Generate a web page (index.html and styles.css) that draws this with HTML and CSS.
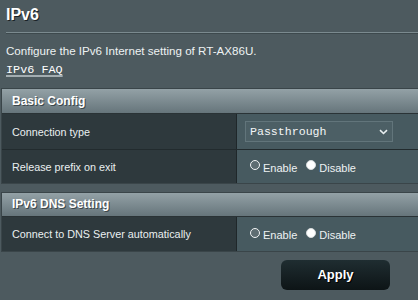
FILE: index.html
```html
<!DOCTYPE html>
<html>
<head>
<meta charset="utf-8">
<link rel="stylesheet" href="styles.css">
</head>
<body>
<div class="page">
  <div class="title">IPv6</div>
  <div class="split"></div>
  <div class="desc">Configure the IPv6 Internet setting of RT-AX86U.</div>
  <div class="faq"><a href="#">IPv6 FAQ</a></div>

  <div class="table first">
    <div class="thead">Basic Config</div>
    <div class="row r1">
      <div class="label">Connection type</div>
      <div class="value">
        <div class="select"><span>Passthrough</span>
          <svg class="chev" width="9" height="6" viewBox="0 0 9 6"><path d="M1 1.2 L4.5 4.5 L8 1.2" fill="none" stroke="#e8eef0" stroke-width="1.6"/></svg>
        </div>
      </div>
    </div>
    <div class="row r2">
      <div class="label">Release prefix on exit</div>
      <div class="value radios">
        <span class="radio on"></span><span class="rl">Enable</span>
        <span class="radio off"></span><span class="rl">Disable</span>
      </div>
    </div>
  </div>

  <div class="table second">
    <div class="thead">IPv6 DNS Setting</div>
    <div class="row r3">
      <div class="label">Connect to DNS Server automatically</div>
      <div class="value radios">
        <span class="radio on"></span><span class="rl">Enable</span>
        <span class="radio off"></span><span class="rl">Disable</span>
      </div>
    </div>
  </div>

  <div class="actions"><div class="apply">Apply</div></div>
</div>
</body>
</html>
```

FILE: styles.css
```css
html, body {
  margin: 0;
  padding: 0;
  background: #4d5a5f;
}
.page {
  width: 418px;
  height: 300px;
  overflow: hidden;
  font-family: "Liberation Sans", Arial, sans-serif;
  color: #ffffff;
}
.title {
  height: 32px;
  padding-left: 6px;
  font-size: 16px;
  font-weight: bold;
  line-height: 30px;
  text-shadow: 1px 1px 0 #1a2226;
}
.split {
  margin-left: 6px;
  height: 1px;
  background: #7b8a8f;
  border-bottom: 1px solid #3d494d;
}
.desc {
  padding: 9px 0 0 6px;
  font-size: 11.6px;
  line-height: 16px;
  color: #eef2f3;
}
.faq {
  box-sizing: border-box;
  height: 29px;
  padding: 4px 0 0 6px;
  font-family: "Liberation Mono", "Courier New", monospace;
  font-size: 11.8px;
  line-height: 14px;
}
.faq a {
  color: #ffffff;
  text-decoration: underline;
  text-decoration-color: #a3adb1;
  text-decoration-thickness: 1.5px;
  text-underline-offset: 2px;
}
.table {
  margin-left: 1px;
  border: 1px solid #3a4549;
  border-right: none;
  background: #222b2e;
}
.thead {
  height: 24px;
  line-height: 24px;
  padding-left: 10px;
  font-size: 12px;
  font-weight: bold;
  background: linear-gradient(#93a1a6, #66757b);
  text-shadow: 1px 1px 0 #3c474b;
  border-bottom: 1px solid #2a3336;
}
.second .thead {
  height: 23px;
  line-height: 23px;
}
.row {
  display: flex;
  border-bottom: 1px solid #222b2e;
}
.row:last-child { border-bottom: none; }
.r1 { height: 35px; }
.r2 { height: 33px; }
.r3 { height: 34px; }
.label {
  width: 224px;
  flex: none;
  padding-left: 10px;
  display: flex;
  align-items: center;
  background: #2e393d;
  font-size: 10.8px;
  color: #eaeff0;
  border-right: 1px solid #1f272a;
}
.value {
  flex: 1;
  display: flex;
  align-items: center;
  padding-left: 8px;
  background: #475a60;
  font-size: 11px;
}
.select {
  width: 138px;
  height: 19px;
  border: 1px solid #62757b;
  background: #4c5f65;
  display: flex;
  align-items: center;
  justify-content: space-between;
  padding: 0 4px 0 4px;
  font-family: "Liberation Mono", "Courier New", monospace;
  font-size: 11.6px;
  color: #f2f5f6;
}
.chev { margin-top: 1px; }
.radios { padding-left: 13px; }
.radio {
  width: 10px;
  height: 10px;
  border-radius: 50%;
  box-sizing: border-box;
  flex: none;
  margin-top: -3px;
}
.radio.on {
  border: 1.5px solid #f2f4f5;
  background: #5e6d72;
}
.radio.off {
  background: #ffffff;
  border: 1px solid #d8dcdd;
  margin-left: 9px;
}
.rl {
  margin-left: 3px;
  color: #eef2f3;
  padding-top: 2px;
}
.table.second { margin-top: 8px; }
.actions {
  display: flex;
  justify-content: flex-end;
  padding: 8px 28px 0 0;
}
.apply {
  width: 109px;
  height: 30px;
  border-radius: 6px;
  background: linear-gradient(#1f2d31, #0d1416);
  font-size: 13px;
  font-weight: bold;
  line-height: 30px;
  text-align: center;
  text-shadow: 1px 1px 0 #000;
}
```
